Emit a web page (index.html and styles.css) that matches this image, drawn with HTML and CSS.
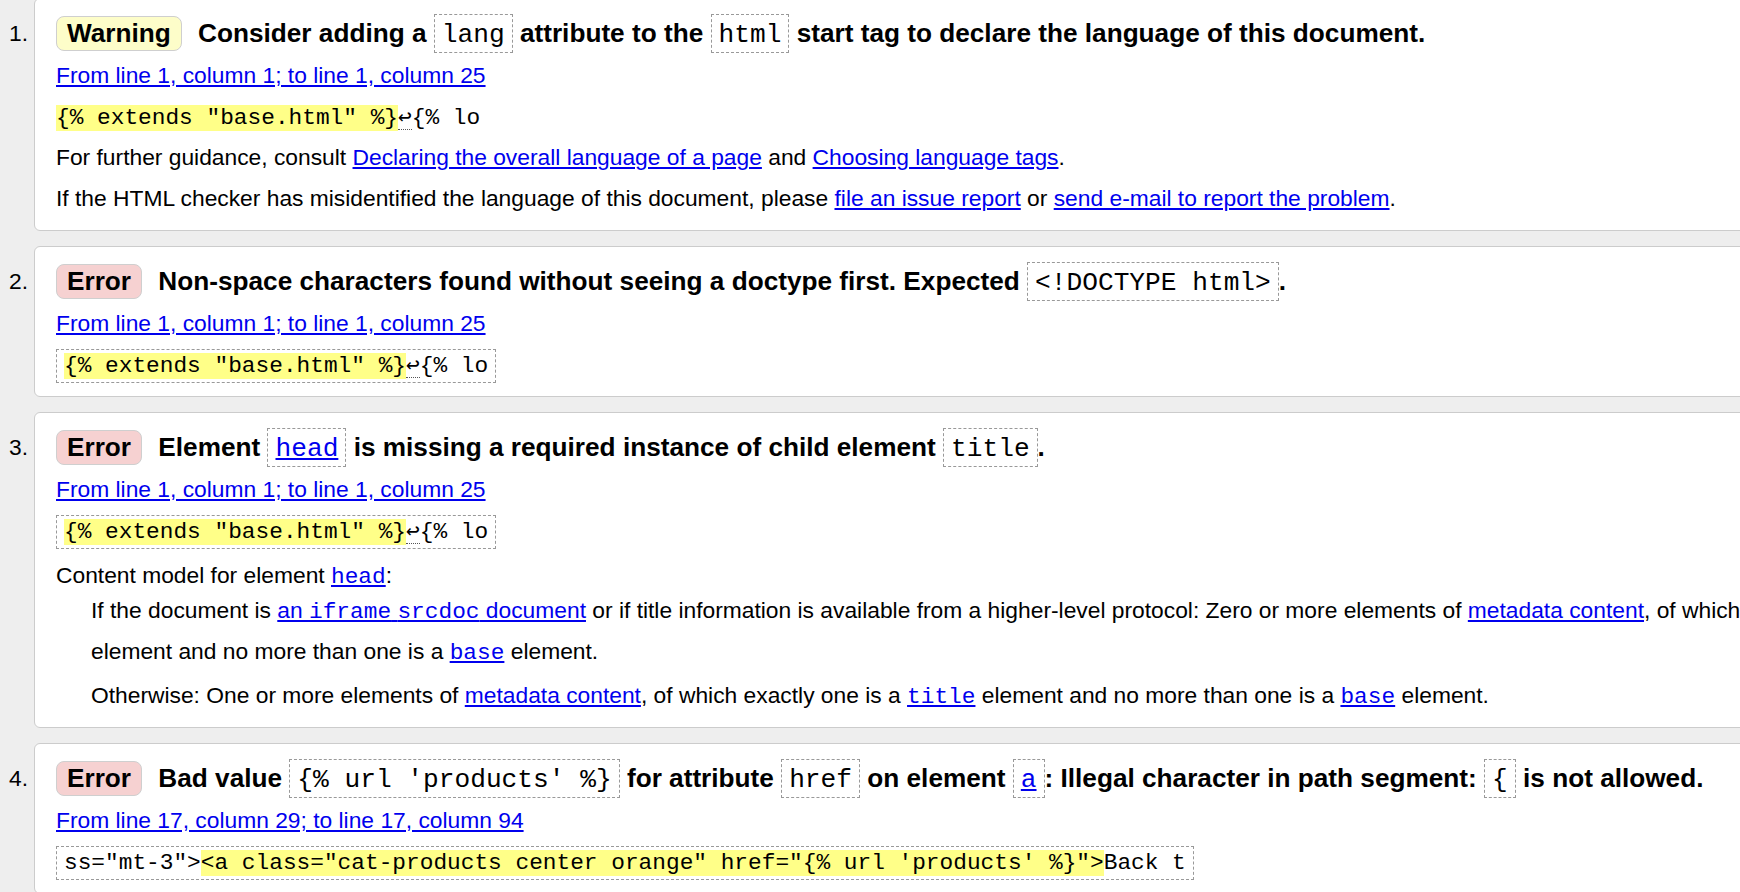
FILE: index.html
```html
<!DOCTYPE html>
<html lang="en">
<head>
<meta charset="utf-8">
<title>Validation results</title>
<link rel="stylesheet" href="styles.css">
</head>
<body>
<ol class="messages">
  <li class="msg">
    <span class="num">1.</span>
    <div class="card warning">
      <p class="title"><strong class="badge">Warning</strong> <span>Consider adding a <code>lang</code> attribute to the <code>html</code> start tag to declare the language of this document.</span></p>
      <p class="loc"><a href="#">From line 1, column 1; to line 1, column 25</a></p>
      <p class="extract"><code><b>{% extends "base.html" %}</b><span class="lf">↩</span>{% lo</code></p>
      <p>For further guidance, consult <a href="#">Declaring the overall language of a page</a> and <a href="#">Choosing language tags</a>.</p>
      <p>If the HTML checker has misidentified the language of this document, please <a href="#">file an issue report</a> or <a href="#">send e-mail to report the problem</a>.</p>
    </div>
  </li>
  <li class="msg">
    <span class="num">2.</span>
    <div class="card error">
      <p class="title"><strong class="badge">Error</strong> <span>Non-space characters found without seeing a doctype first. Expected <code>&lt;!DOCTYPE html&gt;</code>.</span></p>
      <p class="loc"><a href="#">From line 1, column 1; to line 1, column 25</a></p>
      <p class="extract"><code class="boxed"><b>{% extends "base.html" %}</b><span class="lf">↩</span>{% lo</code></p>
    </div>
  </li>
  <li class="msg">
    <span class="num">3.</span>
    <div class="card error">
      <p class="title"><strong class="badge">Error</strong> <span>Element <code><a href="#">head</a></code> is missing a required instance of child element <code>title</code>.</span></p>
      <p class="loc"><a href="#">From line 1, column 1; to line 1, column 25</a></p>
      <p class="extract"><code class="boxed"><b>{% extends "base.html" %}</b><span class="lf">↩</span>{% lo</code></p>
      <dl class="model">
        <dt>Content model for element <a href="#"><code>head</code></a>:</dt>
        <dd>If the document is <a href="#">an <code>iframe</code> <code>srcdoc</code> document</a> or if title information is available from a higher-level protocol: Zero or more elements of <a href="#">metadata content</a>, of which no more than one is a <a href="#"><code>title</code></a> element and no more than one is a <a href="#"><code>base</code></a> element.</dd>
        <dd>Otherwise: One or more elements of <a href="#">metadata content</a>, of which exactly one is a <a href="#"><code>title</code></a> element and no more than one is a <a href="#"><code>base</code></a> element.</dd>
      </dl>
    </div>
  </li>
  <li class="msg">
    <span class="num">4.</span>
    <div class="card error">
      <p class="title"><strong class="badge">Error</strong> <span>Bad value <code>{% url 'products' %}</code> for attribute <code>href</code> on element <code><a href="#">a</a></code>: Illegal character in path segment: <code>{</code> is not allowed.</span></p>
      <p class="loc"><a href="#">From line 17, column 29; to line 17, column 94</a></p>
      <p class="extract"><code class="boxed">ss="mt-3"&gt;<b>&lt;a class="cat-products center orange" href="{% url 'products' %}"&gt;</b>Back t</code></p>
    </div>
  </li>
</ol>
</body>
</html>
```

FILE: styles.css
```css
* {
  box-sizing: border-box;
}

html,
body {
  margin: 0;
  padding: 0;
}

body {
  background: #eeeeee;
  color: #000;
  font-family: "Liberation Sans", Arial, sans-serif;
  font-size: 22.8px;
  overflow: hidden;
}

.messages {
  list-style: none;
  margin: -2px 0 0;
  padding: 0;
  width: 2120px;
  display: flex;
  flex-direction: column;
  gap: 15px;
}

.msg {
  display: flex;
  align-items: flex-start;
}

.num {
  flex: 0 0 34px;
  padding-right: 6px;
  text-align: right;
  margin-top: 13px;
  line-height: 44px;
}

.card {
  flex: 1;
  background: #fff;
  border: 1px solid #cccccc;
  border-radius: 6px;
  padding: 12px 21px 11px 21px;
}

.card p {
  margin: 0;
  line-height: 41px;
}

.card p.title {
  font-size: 26.2px;
  font-weight: bold;
  line-height: 44px;
}

.badge {
  display: inline-block;
  padding: 1px 10px;
  margin-right: 9px;
  border: 1px solid #cfcfcf;
  border-radius: 8px;
  line-height: normal;
}

.warning .badge {
  background: #fdfdc9;
}

.error .badge {
  background: #f6d1d1;
}

code {
  font-family: "Liberation Mono", "DejaVu Sans Mono", monospace;
  font-size: 1em;
  line-height: 1;
}

.title code {
  border: 1px dashed #999;
  padding: 5px 7px 2px;
  font-weight: normal;
}

a {
  color: #0000ee;
}

.extract code.boxed {
  border: 1px dashed #999;
  padding: 3px 7px;
}

.extract b {
  font-weight: normal;
  background: #ffff88;
}

.lf {
  font-family: "DejaVu Sans Mono", monospace;
  border-bottom: 1px dotted #555;
}

.model {
  margin: 10px 0 0;
}

.model dt {
  line-height: 29px;
}

.model dd {
  margin: 0 0 0 35px;
  line-height: 41px;
}

.model dd + dd {
  margin-top: 3px;
}
```
